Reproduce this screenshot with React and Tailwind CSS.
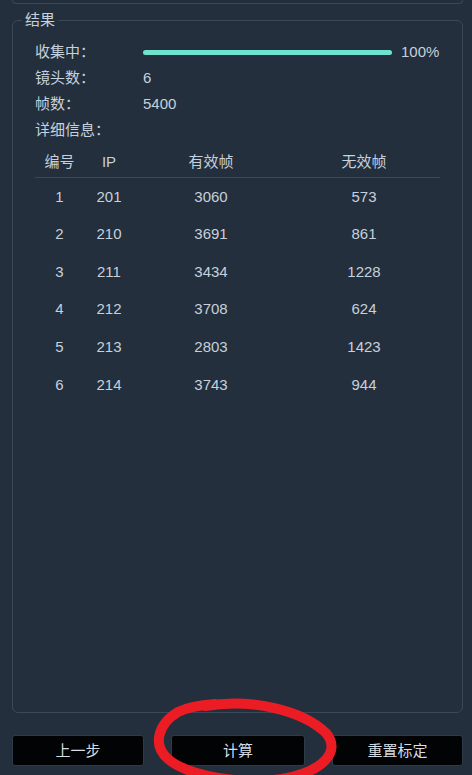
import React from "react";

const rows = [
  { id: 1, ip: 201, valid: 3060, invalid: 573 },
  { id: 2, ip: 210, valid: 3691, invalid: 861 },
  { id: 3, ip: 211, valid: 3434, invalid: 1228 },
  { id: 4, ip: 212, valid: 3708, invalid: 624 },
  { id: 5, ip: 213, valid: 2803, invalid: 1423 },
  { id: 6, ip: 214, valid: 3743, invalid: 944 },
];

const cols = "grid grid-cols-[49px_50px_154px_152px] text-center";

function InfoRow({ label, children }) {
  return (
    <div className="flex items-center h-[26px]">
      <span className="w-[108px] shrink-0">{label}</span>
      {children}
    </div>
  );
}

export default function App() {
  return (
    <div
      className="relative w-[472px] h-[775px] overflow-hidden bg-[#232f3c] text-[#c6d1dd] text-[15px]"
      style={{ fontFamily: '"Liberation Sans", "Noto Sans CJK SC", sans-serif' }}
    >
      <div className="pl-3 pr-[9px]">
        {/* bottom edge of previous panel */}
        <div className="h-[4px] border border-t-0 border-[#3a4857] rounded-b-md" />

        {/* results */}
        <fieldset className="mt-[9px] h-[700px] border border-[#3a4857] rounded-md pl-[22px] pr-[22px]">
          <legend className="ml-[-13px] px-[3px] leading-[14px]">结果</legend>

          <div className="pt-[12px]">
            <InfoRow label="收集中：">
              <div className="w-[249px] h-[5px] rounded-full bg-[#6fe2cf]" />
              <span className="ml-[9px]">100%</span>
            </InfoRow>
            <InfoRow label="镜头数：">6</InfoRow>
            <InfoRow label="帧数：">5400</InfoRow>
            <InfoRow label="详细信息：" />
          </div>

          <div className="w-[405px] mt-[5px]">
            <div className={`${cols} h-[30px] items-center border-b border-[#3a4857]`}>
              <span>编号</span>
              <span>IP</span>
              <span>有效帧</span>
              <span>无效帧</span>
            </div>
            {rows.map((r) => (
              <div key={r.id} className={`${cols} h-[37.6px] items-center`}>
                <span>{r.id}</span>
                <span>{r.ip}</span>
                <span>{r.valid}</span>
                <span>{r.invalid}</span>
              </div>
            ))}
          </div>
        </fieldset>

        <div className="flex justify-between mt-[22px]">
          {["上一步", "计算", "重置标定"].map((t, i) => (
            <button
              key={t}
              className={`${i === 1 ? "w-[134px]" : i === 0 ? "w-[132px]" : "w-[131px]"} h-[31px] pt-[2px] bg-[#020304] border border-[#2d3b49] rounded-[3px] text-[#d6dde5] text-[15px]`}
            >
              {t}
            </button>
          ))}
        </div>
      </div>

      {/* hand-drawn annotation */}
      <svg className="absolute inset-0 pointer-events-none" width="472" height="775" viewBox="0 0 472 775">
        <path
          d="M 205 706 C 250 698, 302 710, 326 733 C 342 752, 322 772, 282 779 C 240 785, 188 776, 168 759 C 152 745, 158 724, 178 712 C 188 707, 200 705, 215 704"
          fill="none"
          stroke="#ec1c24"
          strokeWidth="10"
          strokeLinecap="round"
        />
      </svg>
    </div>
  );
}
